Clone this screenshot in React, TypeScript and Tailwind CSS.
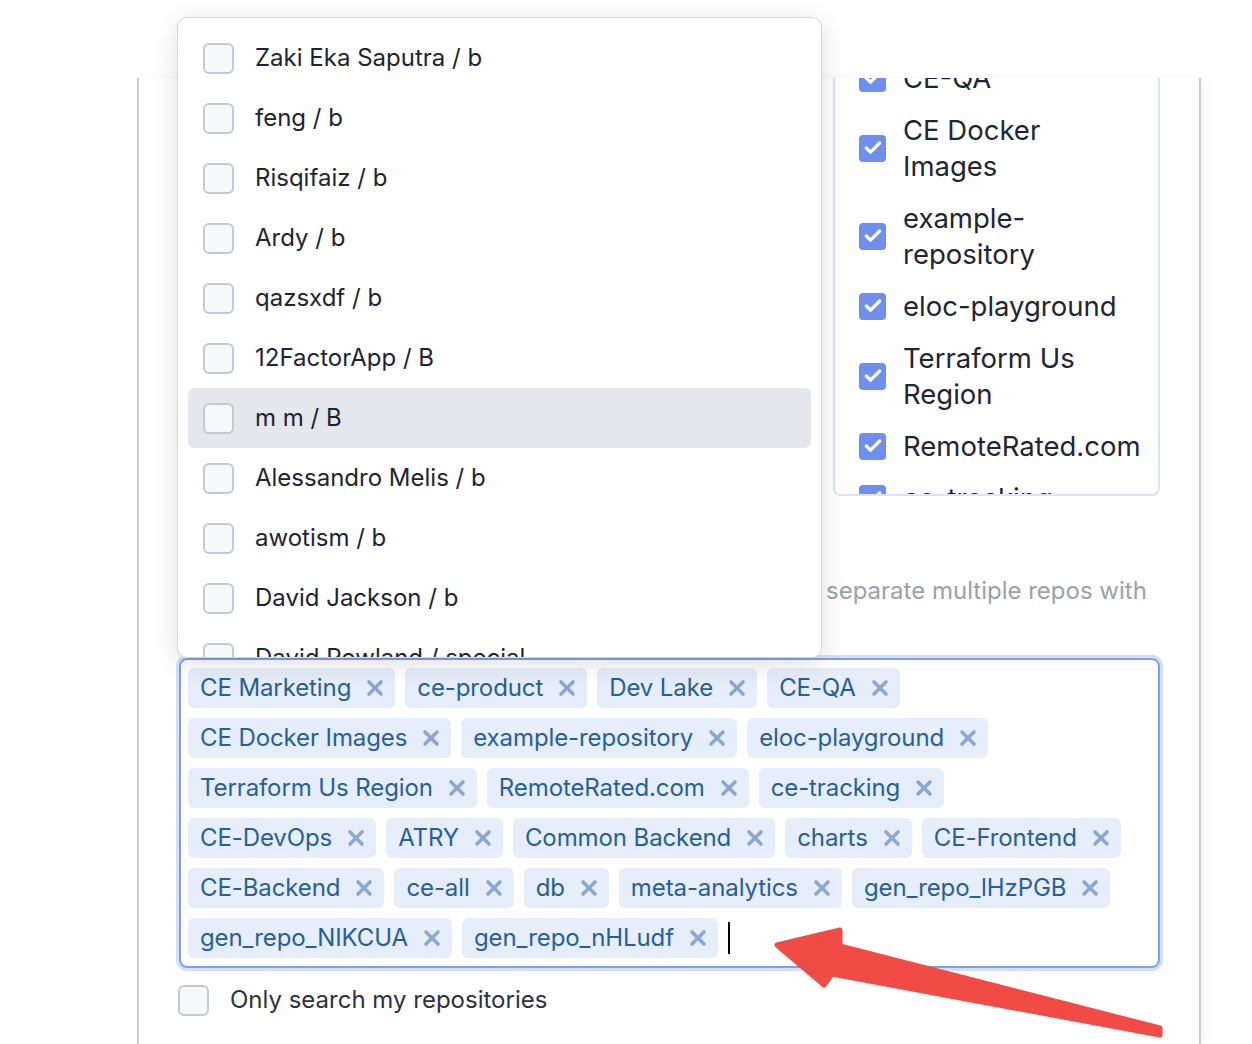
import { Check } from 'lucide-react';

const options = [
  'Zaki Eka Saputra / b',
  'feng / b',
  'Risqifaiz / b',
  'Ardy / b',
  'qazsxdf / b',
  '12FactorApp / B',
  'm m / B',
  'Alessandro Melis / b',
  'awotism / b',
  'David Jackson / b',
  'David Rowland / special',
];

const selectedList = [
  ['CE-QA'],
  ['CE Docker', 'Images'],
  ['example-', 'repository'],
  ['eloc-playground'],
  ['Terraform Us', 'Region'],
  ['RemoteRated.com'],
  ['ce-tracking'],
];

const tagRows = [
  ['CE Marketing', 'ce-product', 'Dev Lake', 'CE-QA'],
  ['CE Docker Images', 'example-repository', 'eloc-playground'],
  ['Terraform Us Region', 'RemoteRated.com', 'ce-tracking'],
  ['CE-DevOps', 'ATRY', 'Common Backend', 'charts', 'CE-Frontend'],
  ['CE-Backend', 'ce-all', 'db', 'meta-analytics', 'gen_repo_lHzPGB'],
  ['gen_repo_NIKCUA', 'gen_repo_nHLudf'],
];

function EmptyBox() {
  return <span className="w-[31px] h-[31px] shrink-0 rounded-md border-2 border-[#c5c9d0] bg-[#f7f8fa]" />;
}

function Tag({ label }: { label: string }) {
  return (
    <span className="h-[40px] flex items-center gap-[15px] pl-[12px] pr-[11px] rounded-md bg-[#e6eefc] text-[#25609c] text-[24px] leading-none whitespace-nowrap tracking-[-0.1px]">
      {label}
      <svg width="18" height="18" viewBox="0 0 18 18" className="shrink-0">
        <path d="M3 3 L15 15 M15 3 L3 15" stroke="#8ba8d1" strokeWidth="3.6" strokeLinecap="round" />
      </svg>
    </span>
  );
}

export default function App() {
  return (
    <div className="relative w-[1252px] h-[1044px] overflow-hidden bg-white font-['Inter',sans-serif]">
      {/* Card */}
      <div className="ml-[137px] mt-[78px] w-[1064px] h-[966px] bg-white border-x-2 border-[#cbcbcb] shadow-[6px_0_10px_rgba(0,0,0,0.04)] pl-[40px] pr-[39px]">
        {/* selected list (scrolled) */}
        <div className="flex justify-end">
          <div className="w-[327px] h-[418px] overflow-hidden rounded-b-lg border-x-2 border-b-2 border-[#dce4f8] pl-[24px] pr-[10px]">
            <div className="-mt-[18px] flex flex-col gap-[16px]">
              {selectedList.map((lines) => (
                <div key={lines.join(' ')} className="flex items-center gap-[17px]">
                  <span className="w-[27px] h-[27px] shrink-0 rounded-[4px] bg-[#6e8ef0] flex items-center justify-center">
                    <Check className="w-[20px] h-[20px] text-white" strokeWidth={4} />
                  </span>
                  <span className="text-[27.5px] leading-[36px] text-[#1f2535]">
                    {lines.map((l, i) => (
                      <span key={i} className="block whitespace-nowrap">{l}</span>
                    ))}
                  </span>
                </div>
              ))}
            </div>
          </div>
        </div>

        {/* hint */}
        <p className="mt-[77px] text-[24px] leading-[36px] text-[#9ba1ab] whitespace-nowrap">
          <span className="inline-block w-[647px] overflow-hidden align-top">Search repositories by name or paste a list,</span>
          separate multiple repos with
        </p>

        {/* tag input */}
        <div className="mt-[49px] h-[310px] rounded-lg border-2 border-[#7e9ef0] ring-[3px] ring-[#d5dffa] px-[7px] py-[8px] flex flex-col gap-[10px]">
          {tagRows.map((row, ri) => (
            <div key={ri} className="flex items-center gap-[10px]">
              {row.map((t) => (
                <Tag key={t} label={t} />
              ))}
              {ri === tagRows.length - 1 && <span className="w-[2px] h-[32px] bg-black" />}
            </div>
          ))}
        </div>

        {/* only mine */}
        <label className="mt-[14px] -ml-px flex items-center gap-[21px]">
          <EmptyBox />
          <span className="text-[24px] text-[#2c3240]">Only search my repositories</span>
        </label>
      </div>

      {/* Dropdown menu */}
      <div className="absolute left-[177px] top-[17px] w-[645px] h-[641px] overflow-hidden rounded-[10px] border border-[#d6d6d6] bg-white shadow-[0_6px_28px_rgba(0,0,0,0.13)] px-[10px] pt-[10px]">
        {options.map((o) => (
          <div
            key={o}
            className={`h-[60px] flex items-center gap-[21px] pl-[15px] rounded-md ${o === 'm m / B' ? 'bg-[#e4e8ec]' : ''}`}
          >
            <EmptyBox />
            <span className="text-[24px] text-[#1e2432] whitespace-nowrap">{o}</span>
          </div>
        ))}
      </div>

      {/* annotation arrow */}
      <svg className="absolute left-0 top-0 pointer-events-none" width="1252" height="1044" viewBox="0 0 1252 1044">
        <polygon
          points="777,945 840,930 840,946 1160,1028 1160,1035 832,974 824,985"
          fill="#f04b45"
          stroke="#f04b45"
          strokeWidth="5"
          strokeLinejoin="round"
        />
      </svg>
    </div>
  );
}
